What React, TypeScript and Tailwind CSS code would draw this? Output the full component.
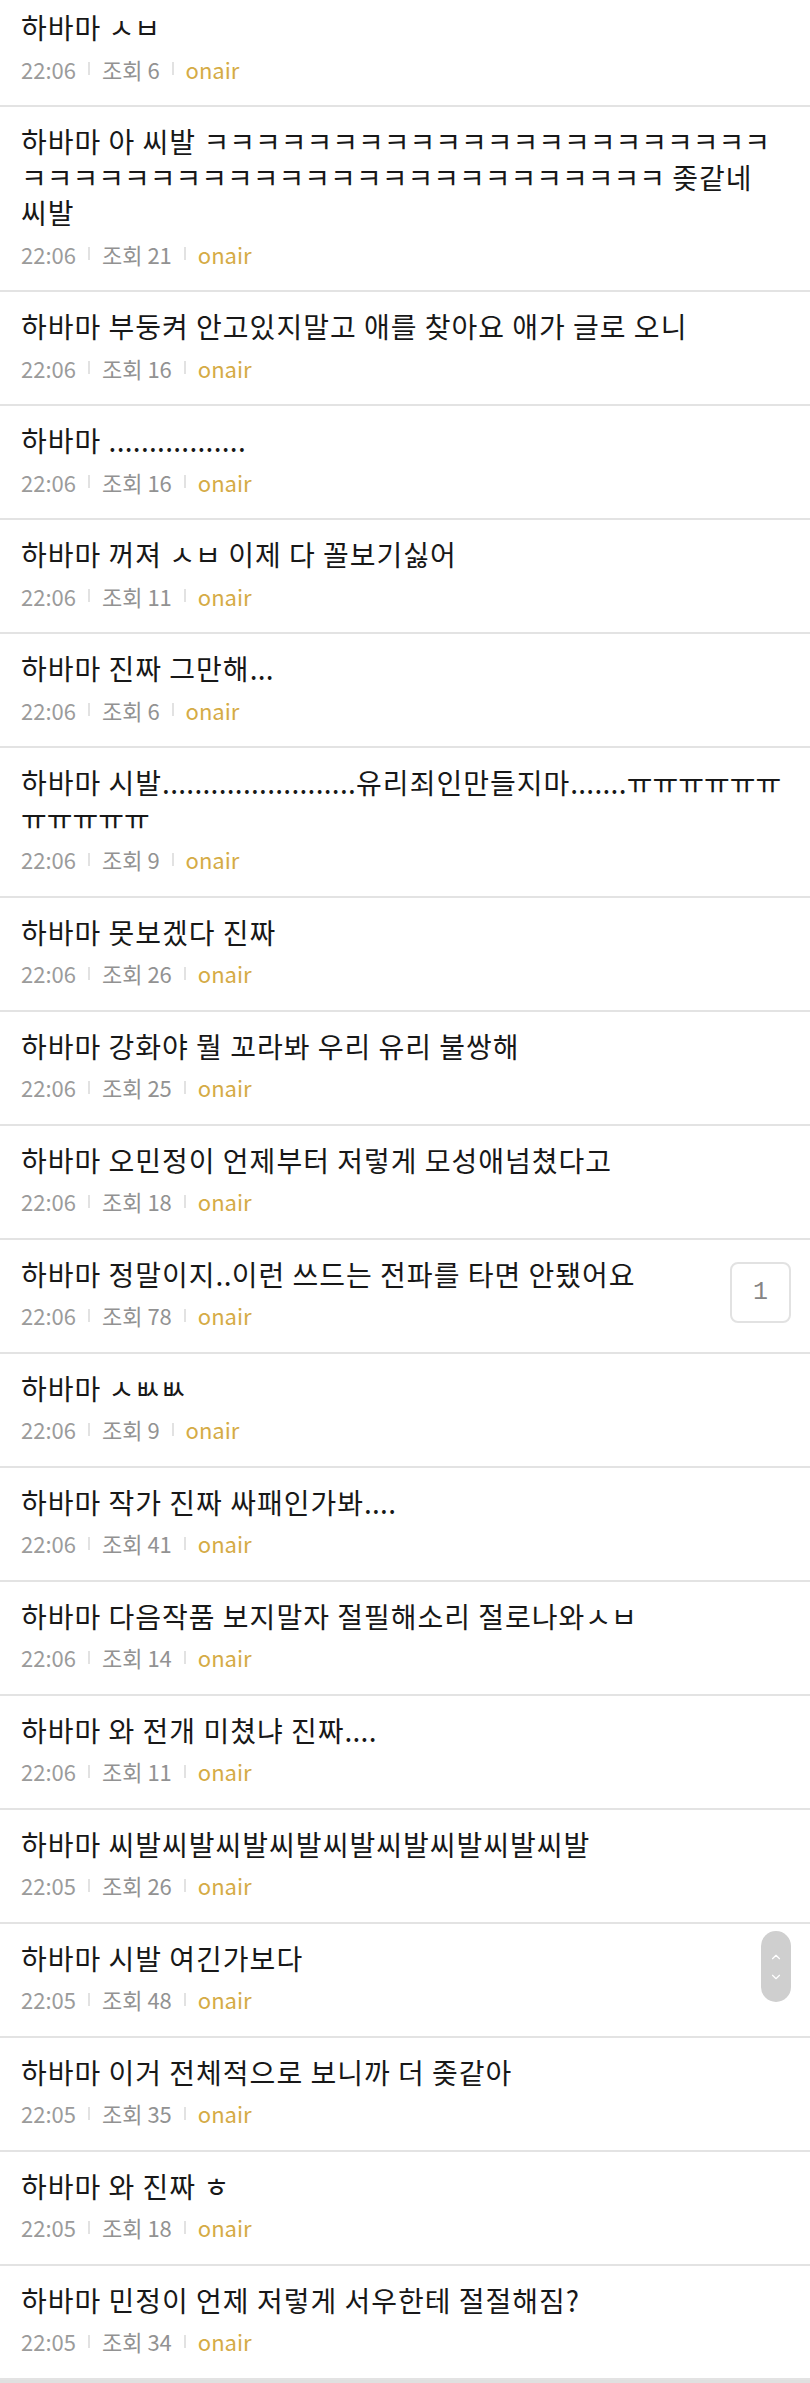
import { ChevronUp, ChevronDown } from 'lucide-react'

type Post = { title: string[]; time: string; views: number; badge?: number }

const posts: Post[] = [
  { title: ['하바마 ㅅㅂ'], time: '22:06', views: 6 },
  { title: ['하바마 아 씨발 ' + 'ㅋ'.repeat(22), 'ㅋ'.repeat(25) + ' 좆같네', '씨발'], time: '22:06', views: 21 },
  { title: ['하바마 부둥켜 안고있지말고 애를 찾아요 애가 글로 오니'], time: '22:06', views: 16 },
  { title: ['하바마 .................'], time: '22:06', views: 16 },
  { title: ['하바마 꺼져 ㅅㅂ 이제 다 꼴보기싫어'], time: '22:06', views: 11 },
  { title: ['하바마 진짜 그만해...'], time: '22:06', views: 6 },
  { title: ['하바마 시발' + '.'.repeat(24) + '유리죄인만들지마.......' + 'ㅠ'.repeat(6), 'ㅠ'.repeat(5)], time: '22:06', views: 9 },
  { title: ['하바마 못보겠다 진짜'], time: '22:06', views: 26 },
  { title: ['하바마 강화야 뭘 꼬라봐 우리 유리 불쌍해'], time: '22:06', views: 25 },
  { title: ['하바마 오민정이 언제부터 저렇게 모성애넘쳤다고'], time: '22:06', views: 18 },
  { title: ['하바마 정말이지..이런 쓰드는 전파를 타면 안됐어요'], time: '22:06', views: 78, badge: 1 },
  { title: ['하바마 ㅅㅄㅄ'], time: '22:06', views: 9 },
  { title: ['하바마 작가 진짜 싸패인가봐....'], time: '22:06', views: 41 },
  { title: ['하바마 다음작품 보지말자 절필해소리 절로나와ㅅㅂ'], time: '22:06', views: 14 },
  { title: ['하바마 와 전개 미쳤냐 진짜....'], time: '22:06', views: 11 },
  { title: ['하바마 씨발씨발씨발씨발씨발씨발씨발씨발씨발'], time: '22:05', views: 26 },
  { title: ['하바마 시발 여긴가보다'], time: '22:05', views: 48 },
  { title: ['하바마 이거 전체적으로 보니까 더 좆같아'], time: '22:05', views: 35 },
  { title: ['하바마 와 진짜 ㅎ'], time: '22:05', views: 18 },
  { title: ['하바마 민정이 언제 저렇게 서우한테 절절해짐?'], time: '22:05', views: 34 },
]

// 자모(ㅋ, ㅠ, ㅅㅂ…)와 점은 원본 폰트에서 음절보다 좁게 찍힘
const Rich = ({ text }: { text: string }) => (
  <>
    {text
      .split(/([\u3131-\u318E]+|\.+)/)
      .filter(Boolean)
      .map((part, i) =>
        /^[\u3131-\u318E]/.test(part) ? (
          <span key={i} className="tracking-[0px]">{part}</span>
        ) : part.startsWith('.') ? (
          <span key={i} className="tracking-[0.3px]">{part}</span>
        ) : (
          part
        )
      )}
  </>
)

const Divider = () => <span className="w-[2px] h-[13px] bg-[#e2e2e2]" />

const PostRow = ({ post }: { post: Post }) => (
  <li className="flex items-center gap-4 pl-[21px] pr-[19px] pt-[17px] pb-[22.5px] border-b-2 border-[#e3e3e3]">
    <div className="flex-1 min-w-0">
      <p className="text-[28px] tracking-[1px] leading-[35.5px] text-[#181818]">
        {post.title.map((line, i) => (
          <span key={i} className="block whitespace-nowrap">
            <Rich text={line} />
          </span>
        ))}
      </p>
      <div className="mt-[9px] flex items-center gap-[12px] text-[22px] leading-[28px]">
        <span className="text-[#9b9b9b]">{post.time}</span>
        <Divider />
        <span className="text-[#929292]">조회 {post.views}</span>
        <Divider />
        <span className="text-[#d5ab45]">onair</span>
      </div>
    </div>
    {post.badge && (
      <div className="w-[61px] h-[61px] shrink-0 rounded-lg border-2 border-[#e2e2e2] flex items-center justify-center text-[25px] text-[#858585] font-['Liberation_Mono',monospace]">
        {post.badge}
      </div>
    )}
  </li>
)

export default function App() {
  return (
    <div className="relative w-[810px] h-[2383px] overflow-hidden bg-white font-['Noto_Sans_CJK_KR','Noto_Sans',sans-serif]">
      <ul className="-mt-[7px]">
        {posts.map((post, i) => (
          <PostRow key={i} post={post} />
        ))}
      </ul>
      <div className="h-[8px] bg-[#e0e0e0]" />

      {/* 스크롤 버튼 */}
      <div className="absolute top-[1931px] right-[19px] w-[30px] h-[71px] rounded-full bg-[#cfcfcf] flex flex-col items-center justify-center gap-[6px]">
        <ChevronUp className="w-[14px] h-[14px] text-white" strokeWidth={2} />
        <ChevronDown className="w-[14px] h-[14px] text-white" strokeWidth={2} />
      </div>
    </div>
  )
}
